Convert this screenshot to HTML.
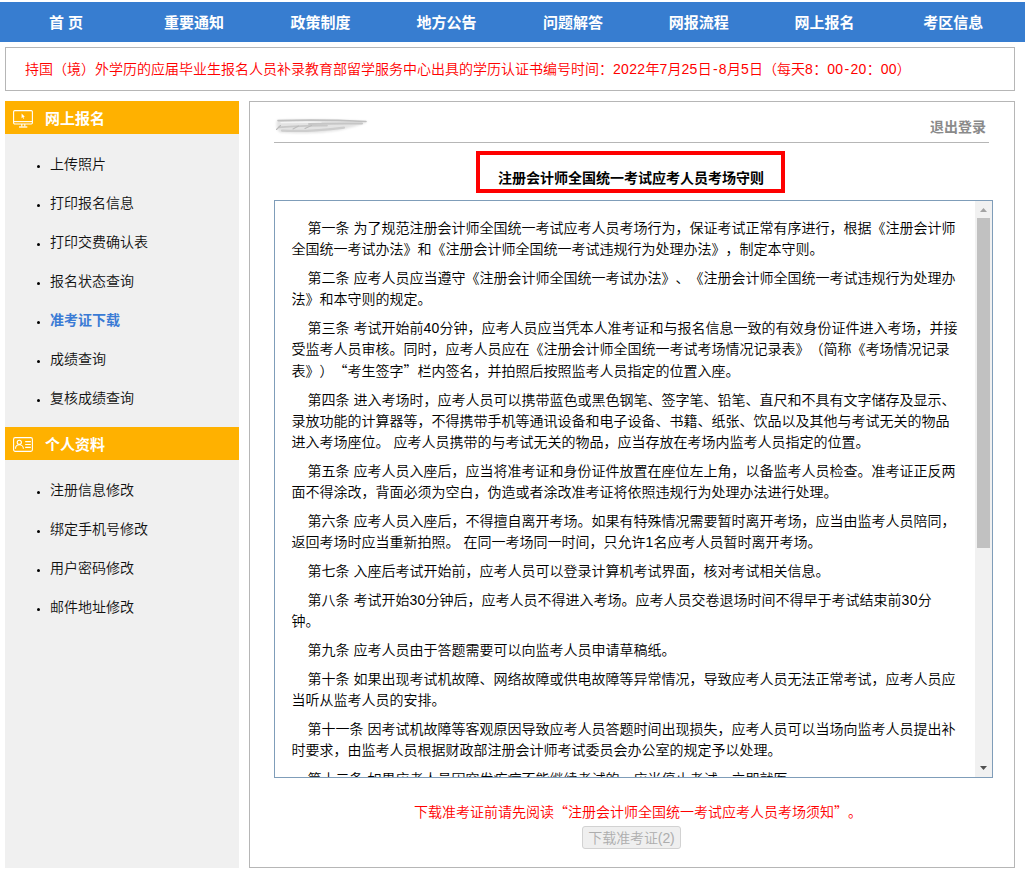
<!DOCTYPE html>
<html lang="zh-CN">
<head>
<meta charset="utf-8">
<title>注册会计师全国统一考试网上报名</title>
<style>
*{box-sizing:border-box;margin:0;padding:0}
html,body{width:1025px;height:874px;background:#fff;overflow:hidden}
body{position:relative;font-weight:350;text-spacing-trim:space-all;font-kerning:none;font-family:"Liberation Sans","Noto Sans CJK SC",sans-serif;font-size:14px;color:#000}
.cjk{font-family:"Noto Sans CJK SC",sans-serif}
.n{letter-spacing:.31px}
.hy{display:inline-block;width:7.1px;text-align:center}
#nav{position:absolute;left:0;top:2px;width:1025px;height:40px;background:#377dd0}
#nav a{position:absolute;top:0;height:40px;line-height:41px;width:120px;margin-left:-60px;text-align:center;color:#fff;font-weight:bold;font-size:15px;white-space:nowrap;text-decoration:none}
#notice{position:absolute;left:5px;top:47px;width:1010px;height:44px;border:1px solid #b6b6b6;color:#f00;line-height:42px;padding-left:19px;white-space:nowrap;font-size:14px}
#side{position:absolute;left:5px;top:101px;width:234px;height:767px;background:#f0f0f0}
.sh{position:absolute;left:0;width:234px;height:33px;background:#ffb100;color:#fff;font-weight:bold;font-size:15px;line-height:35px;padding-left:40px;white-space:nowrap}
.sh svg{position:absolute;left:8px;top:0}
.si{position:absolute;left:45px;height:20px;line-height:20px;font-size:14px;color:#111;white-space:nowrap}
.si:before{content:"";position:absolute;left:-13.3px;top:10.7px;width:3.6px;height:3.6px;background:#000;border-radius:50%}
.si.on{color:#3a7bd5;font-weight:bold}
#main{position:absolute;left:249px;top:101px;width:766px;height:767px;border:1px solid #b6b6b6;background:#fff}
#logout{position:absolute;left:930px;top:117px;height:20px;line-height:20px;font-size:14px;font-weight:bold;color:#8a8a8a;white-space:nowrap}
#hr{position:absolute;left:274px;top:142px;width:715px;height:1px;background:#b6b6b6}
#redbox{position:absolute;left:476px;top:151px;width:309px;height:42px;border:4px solid #fe0000}
#title{position:absolute;left:476.6px;top:167.7px;width:309px;height:20px;line-height:20px;text-align:center;font-weight:bold;font-size:14px;white-space:nowrap}
#box{position:absolute;left:274px;top:200px;width:719px;height:578px;border:1px solid #7f9db9;overflow:hidden;background:#fff}
#txt{position:absolute;left:16.5px;top:17px;width:680px}
#txt p{line-height:21px;margin-bottom:8px;text-indent:16px;white-space:nowrap;font-size:14px;color:#000}
#sb{position:absolute;right:0;top:0;width:17px;height:576px;background:#f1f1f1}
#thumb{position:absolute;left:2px;top:17px;width:13px;height:330px;background:#c1c1c1}
#warn{position:absolute;left:414px;top:801px;height:20px;line-height:20px;color:#f00;font-size:14px;white-space:nowrap}
#btn{position:absolute;left:582px;top:826px;width:99px;height:23px;border:1px solid #d2d2d2;border-radius:3px;background:#efefef;color:#adadad;font-size:14px;line-height:23px;text-align:center;letter-spacing:-.1px;white-space:nowrap}
</style>
</head>
<body>
<div id="nav">
<a style="left:66px">首 页</a>
<a style="left:194px">重要通知</a>
<a style="left:320.5px">政策制度</a>
<a style="left:446.5px">地方公告</a>
<a style="left:573px">问题解答</a>
<a style="left:698.7px">网报流程</a>
<a style="left:824.6px">网上报名</a>
<a style="left:953.2px">考区信息</a>
</div>
<div id="notice">持国（境）外学历的应届毕业生报名人员补录教育部留学服务中心出具的学历认证书编号时间：<span class="n">2022</span>年<span class="n">7</span>月<span class="n">25</span>日<span class="hy">-</span><span class="n">8</span>月<span class="n">5</span>日（每天<span class="n">8</span>：<span class="n">00</span><span class="hy">-</span><span class="n">20</span>：<span class="n">00</span>）</div>

<div id="side">
<div class="sh" style="top:0"><svg width="24" height="33" viewBox="0 0 24 33" fill="none" stroke="#fff" stroke-width="1.1"><rect x="0.6" y="9.6" width="18.8" height="13.4" rx="1.2"/><path d="M0.6 20.6H19.4"/><path d="M8.8 23V25.6M11.8 23V25.6" /><path d="M6 26H14.3" stroke-width="1.3"/><path d="M8.6 12.6L8.6 17.2L9.8 16.2L10.6 17.9L11.2 17.6L10.4 16L11.8 15.8Z" fill="#fff" stroke="none"/></svg>网上报名</div>
<div class="si" style="top:53px">上传照片</div>
<div class="si" style="top:92px">打印报名信息</div>
<div class="si" style="top:131px">打印交费确认表</div>
<div class="si" style="top:170px">报名状态查询</div>
<div class="si on" style="top:209px">准考证下载</div>
<div class="si" style="top:248px">成绩查询</div>
<div class="si" style="top:287px">复核成绩查询</div>
<div class="sh" style="top:326px"><svg width="24" height="33" viewBox="0 0 24 33" fill="none" stroke="#fff" stroke-width="1.1"><rect x="0.6" y="10.6" width="18.8" height="13.8" rx="1.6"/><circle cx="6.3" cy="15.3" r="2.1"/><path d="M2.5 21.8C2.5 19.4 4.2 17.8 6.3 17.8C8.4 17.8 10.4 19.4 10.4 21.8"/><path d="M12.2 14.6H17.8M12.2 17.5H17.8M12.2 20.4H17.8"/></svg>个人资料</div>
<div class="si" style="top:379px">注册信息修改</div>
<div class="si" style="top:418px">绑定手机号修改</div>
<div class="si" style="top:457px">用户密码修改</div>
<div class="si" style="top:496px">邮件地址修改</div>
</div>

<div id="main"></div>
<svg id="smudge" style="position:absolute;left:265px;top:105px" width="120" height="40" viewBox="0 0 120 40"><defs><filter id="bl" x="-20%" y="-50%" width="140%" height="200%"><feGaussianBlur stdDeviation="1"/></filter><filter id="bs" x="-20%" y="-50%" width="140%" height="200%"><feGaussianBlur stdDeviation="0.5"/></filter></defs><path filter="url(#bl)" d="M12 15C40 14 80 14.5 103 16.5C98 19.5 88 22 78 24.5C60 28.5 35 29 15 27.5C11 25.5 11 19 12 15Z" fill="#e3e3e3"/><g filter="url(#bs)" fill="none" stroke-linecap="round"><path d="M13 15.6C40 14.8 75 15.2 101 16.5" stroke="#bfbfbf" stroke-width="1.6"/><path d="M16 17.6C30 17.2 45 17.2 56 17.4" stroke="#f4f4f4" stroke-width="1.3"/><path d="M44 19C60 18.2 80 18.4 97 18.4" stroke="#c6c6c6" stroke-width="2"/><path d="M14 22.4C25 21 40 20.9 62 20.6" stroke="#c8c8c8" stroke-width="1.8"/><path d="M17 25.6C35 26.6 55 25.6 79 22.6" stroke="#cdcdcd" stroke-width="2.2"/><path d="M11.5 24.5L15.5 20.5M28 24L33.5 21M40 23.5L46.5 20.5" stroke="#bbb" stroke-width="1.1"/></g></svg>
<div id="logout">退出登录</div>
<div id="hr"></div>
<div id="redbox"></div>
<div id="title">注册会计师全国统一考试应考人员考场守则</div>

<div id="box">
<div id="txt">
<p>第一条 为了规范注册会计师全国统一考试应考人员考场行为，保证考试正常有序进行，根据《注册会计师<br>全国统一考试办法》和《注册会计师全国统一考试违规行为处理办法》，制定本守则。</p>
<p>第二条 应考人员应当遵守《注册会计师全国统一考试办法》、《注册会计师全国统一考试违规行为处理办<br>法》和本守则的规定。</p>
<p>第三条 考试开始前<span class="n">40</span>分钟，应考人员应当凭本人准考证和与报名信息一致的有效身份证件进入考场，并接<br>受监考人员审核。同时，应考人员应在《注册会计师全国统一考试考场情况记录表》（简称《考场情况记录<br>表》）<span class="cjk">“</span>考生签字<span class="cjk">”</span>栏内签名，并拍照后按照监考人员指定的位置入座。</p>
<p>第四条 进入考场时，应考人员可以携带蓝色或黑色钢笔、签字笔、铅笔、直尺和不具有文字储存及显示、<br>录放功能的计算器等，不得携带手机等通讯设备和电子设备、书籍、纸张、饮品以及其他与考试无关的物品<br>进入考场座位。 应考人员携带的与考试无关的物品，应当存放在考场内监考人员指定的位置。</p>
<p>第五条 应考人员入座后，应当将准考证和身份证件放置在座位左上角，以备监考人员检查。准考证正反两<br>面不得涂改，背面必须为空白，伪造或者涂改准考证将依照违规行为处理办法进行处理。</p>
<p>第六条 应考人员入座后，不得擅自离开考场。如果有特殊情况需要暂时离开考场，应当由监考人员陪同，<br>返回考场时应当重新拍照。 在同一考场同一时间，只允许<span class="n">1</span>名应考人员暂时离开考场。</p>
<p>第七条 入座后考试开始前，应考人员可以登录计算机考试界面，核对考试相关信息。</p>
<p>第八条 考试开始<span class="n">30</span>分钟后，应考人员不得进入考场。应考人员交卷退场时间不得早于考试结束前<span class="n">30</span>分<br>钟。</p>
<p>第九条 应考人员由于答题需要可以向监考人员申请草稿纸。</p>
<p>第十条 如果出现考试机故障、网络故障或供电故障等异常情况，导致应考人员无法正常考试，应考人员应<br>当听从监考人员的安排。</p>
<p>第十一条 因考试机故障等客观原因导致应考人员答题时间出现损失，应考人员可以当场向监考人员提出补<br>时要求，由监考人员根据财政部注册会计师考试委员会办公室的规定予以处理。</p>
<p>第十二条 如果应考人员因突发疾病不能继续考试的，应当停止考试，立即就医。</p>
</div>
<div id="sb"><svg width="17" height="576" viewBox="0 0 17 576" style="position:absolute;left:0;top:0"><path d="M5 11L8.5 7L12 11Z" fill="#a3a3a3"/><path d="M5 565L12 565L8.5 569Z" fill="#505050"/></svg><div id="thumb"></div></div>
</div>

<div id="warn">下载准考证前请先阅读<span class="cjk">“</span>注册会计师全国统一考试应考人员考场须知<span class="cjk">”</span>。</div>
<div id="btn">下载准考证(2)</div>
</body>
</html>
